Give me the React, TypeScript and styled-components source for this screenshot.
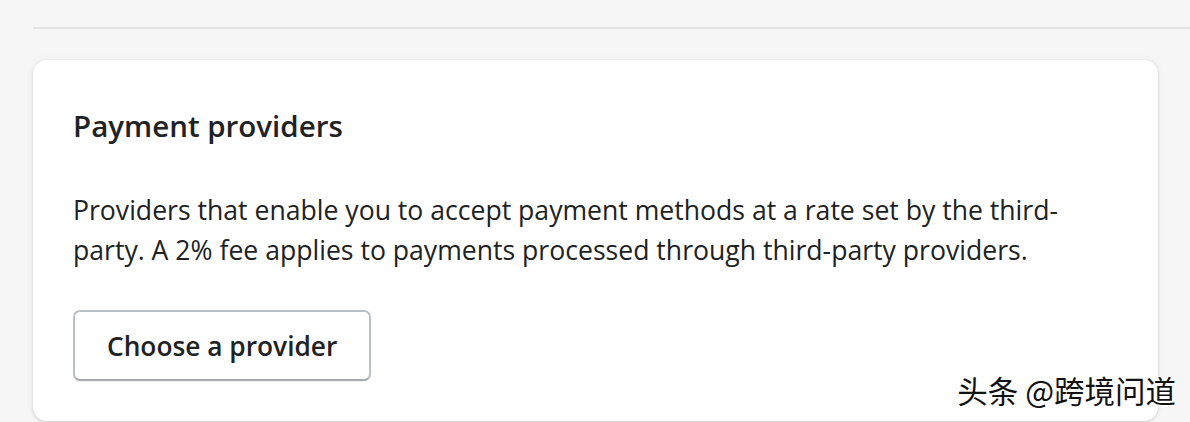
import styled, { createGlobalStyle } from 'styled-components'

const GlobalStyle = createGlobalStyle`
  html, body {
    margin: 0;
    padding: 0;
    background: #f6f6f7;
  }
  body {
    font-family: "Open Sans", "Noto Sans", "Noto Sans CJK SC", sans-serif;
    color: #202223;
  }
`

const Page = styled.div`
  position: relative;
  height: 422px;
  overflow: hidden;
  padding: 0 32px 0 33px;
`

const Divider = styled.hr`
  margin: 27px -32px 0 0;
  border: none;
  border-top: 2px solid #e3e3e3;
`

const Card = styled.section`
  margin-top: 31px;
  background: #fff;
  border-radius: 14px;
  box-shadow: 0 0 8px rgba(23, 24, 24, 0.05), 0 1px 3px rgba(0, 0, 0, 0.15);
  padding: 42px 40px 40px 40px;
  display: flex;
  flex-direction: column;
  align-items: flex-start;
  gap: 40px;
`

const Title = styled.h2`
  margin: 0;
  font-size: 29.5px;
  line-height: 48px;
  font-weight: 600;
  color: #202223;
`

const Body = styled.p`
  margin: 0;
  font-size: 26.6px;
  line-height: 40px;
  color: #202223;
`

const Button = styled.button`
  height: 71px;
  padding: 0 32px;
  background: #fff;
  border: 2px solid #babfc3;
  border-bottom-color: #a8acb0;
  border-radius: 7px;
  box-shadow: 0 1px 0 rgba(0, 0, 0, 0.05);
  font-family: inherit;
  font-size: 26.3px;
  font-weight: 600;
  color: #202223;
  cursor: pointer;
`

const Watermark = styled.div`
  position: absolute;
  right: 14px;
  bottom: 15px;
  font-family: "Noto Sans CJK SC", sans-serif;
  font-size: 30.5px;
  line-height: 34px;
  font-weight: 400;
  color: #111;
  text-shadow: 1px 1px 0 #fff, -1px -1px 0 #fff, 1px -1px 0 #fff, -1px 1px 0 #fff, 2px 2px 1px rgba(255, 255, 255, 0.8);
`

export default function App() {
  return (
    <>
      <GlobalStyle />
      <Page>
        <Divider />
        <Card>
          <Title>Payment providers</Title>
          <Body>
            Providers that enable you to accept payment methods at a rate set by the third-
            <br />
            party. A 2% fee applies to payments processed through third-party providers.
          </Body>
          <Button>Choose a provider</Button>
        </Card>
        <Watermark>头条 @跨境问道</Watermark>
      </Page>
    </>
  )
}
